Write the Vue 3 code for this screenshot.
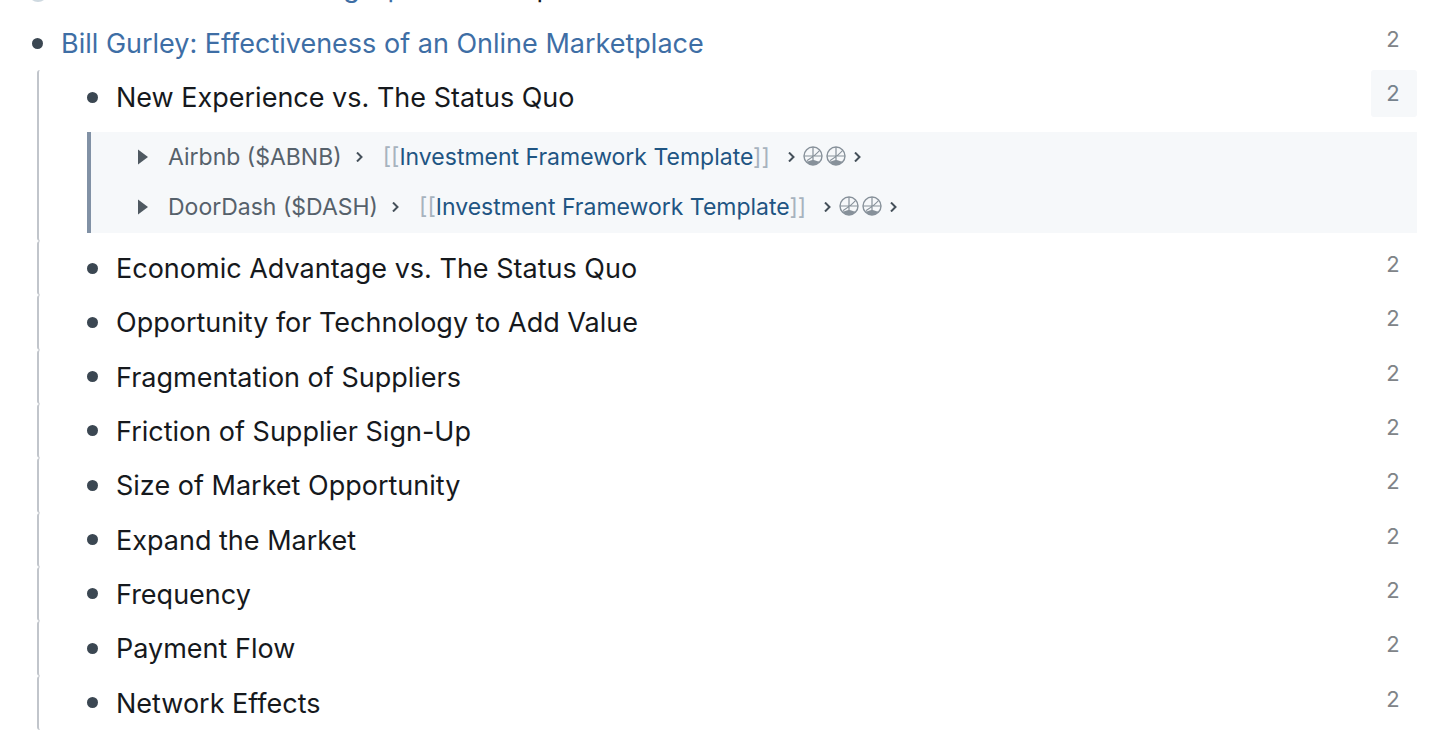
<script setup>
import { ref } from 'vue'

const mentions = [
  { name: 'Airbnb ($ABNB)', page: 'Investment Framework Template' },
  { name: 'DoorDash ($DASH)', page: 'Investment Framework Template' },
]

const open = ref('New Experience vs. The Status Quo')

const blocks = [
  'New Experience vs. The Status Quo',
  'Economic Advantage vs. The Status Quo',
  'Opportunity for Technology to Add Value',
  'Fragmentation of Suppliers',
  'Friction of Supplier Sign-Up',
  'Size of Market Opportunity',
  'Expand the Market',
  'Frequency',
  'Payment Flow',
  'Network Effects',
]

function toggle(title) {
  open.value = open.value === title ? '' : title
}
</script>

<template>
  <main class="outline">
    <div class="previous">
      <span class="bullet halo"></span>
      <p class="title"><a href="#">Investments: Marketing Updates</a> Template</p>
    </div>

    <div class="row">
      <span class="bullet"></span>
      <h1 class="title"><a href="#">Bill Gurley: Effectiveness of an Online Marketplace</a></h1>
      <button class="count" type="button" aria-label="2 references">2</button>
    </div>

    <ul class="children">
      <li v-for="block in blocks" :key="block" class="block" :class="{ expanded: open === block }">
        <div class="row">
          <span class="bullet"></span>
          <p class="title">{{ block }}</p>
          <button
            class="count"
            :class="{ active: open === block }"
            type="button"
            aria-label="2 references"
            :aria-expanded="open === block"
            @click="toggle(block)"
          >2</button>
        </div>

        <div v-if="open === block" class="mentions">
          <div v-for="m in mentions" :key="m.name" class="mention">
            <button class="caret" type="button" :aria-label="'Expand ' + m.name">
              <svg width="10" height="16" viewBox="0 0 10 16"><path d="M0 0.5 10 8 0 15.5z" fill="#4f5961" /></svg>
            </button>
            <span class="name">{{ m.name }}</span>
            <svg class="chevron" width="7" height="10" viewBox="0 0 7 10"><path d="M1 0.500l4.500 4.500L1 9.500" /></svg>
            <span class="page"><span class="bracket">[[</span><a href="#">{{ m.page }}</a><span class="bracket">]]</span></span>
            <svg class="chevron" width="7" height="10" viewBox="0 0 7 10"><path d="M1 0.500l4.500 4.500L1 9.500" /></svg>
            <span class="globes">
              <svg v-for="n in 2" :key="n" width="20" height="20" viewBox="0 0 20 20">
                <circle cx="10" cy="10" r="9" fill="none" stroke="#87919a" stroke-width="1.4" />
                <path d="M10 1v15M1 10h18M4 14.5C8 12 13 9 16.5 4.5" fill="none" stroke="#87919a" stroke-width="1.2" />
                <path d="M3.5 15.500c3-.3 4-1.500 6.500-1.500s3.500 1.200 6.500 1.500c-3.500 4.500-9.500 4.500-13 0z" fill="#87919a" />
              </svg>
            </span>
            <svg class="chevron" width="7" height="10" viewBox="0 0 7 10"><path d="M1 0.500l4.500 4.500L1 9.500" /></svg>
          </div>
        </div>
      </li>
    </ul>
  </main>
</template>

<style>
body {
  margin: 0;
  background: #fff;
}
</style>

<style scoped>
.outline {
  display: flex;
  flex-direction: column;
  box-sizing: border-box;
  min-height: 100vh;
  padding: 0 39px 8px 32px;
  overflow: hidden;
  font-family: Inter, "Liberation Sans", sans-serif;
  font-size: 27px;
  line-height: 32px;
  color: #16191d;
}

a {
  color: #3e6ea5;
  text-decoration: none;
}

button {
  padding: 0;
  border: 0;
  background: none;
  font: inherit;
  cursor: pointer;
}

.previous,
.row {
  display: flex;
  align-items: center;
}

.previous {
  margin-top: -28px;
  height: 44px;
  align-items: flex-start;
}

.row {
  min-height: 54px;
}

.bullet {
  flex: none;
  width: 11px;
  height: 11px;
  margin-right: 18px;
  border-radius: 50%;
  background: #3b4752;
}

.halo {
  width: 20px;
  height: 20px;
  margin: 10px 14px 0 -4px;
  background: #ced9e0;
}

.title {
  flex: 1;
  margin: 0;
  font-size: inherit;
  font-weight: 400;
}

.row .title {
  padding-top: 2px;
}

.count {
  flex: none;
  align-self: flex-start;
  width: 46px;
  height: 47px;
  padding-right: 2px;
  border-radius: 3px;
  font-size: 22px;
  line-height: 47px;
  color: #808488;
}

.count.active {
  background: #f6f8fa;
  color: #77838d;
}

.children {
  display: flex;
  flex: 1;
  flex-direction: column;
  margin: 0;
  padding: 0 0 0 5px;
  list-style: none;
}

.block {
  display: flex;
  flex: 1 0 auto;
  flex-direction: column;
  padding-left: 48px;
  border-left: 2px solid #c1c5cb;
  border-radius: 3px;
}

.block.expanded {
  flex: none;
}

.mentions {
  margin: 8px 0;
  padding: 0 0 1px 47px;
  border-left: 4px solid #8191a5;
  background: #f6f8fa;
  font-size: 23px;
  color: #56616b;
}

.mention {
  display: flex;
  align-items: center;
  min-height: 50px;
}

.caret {
  display: flex;
  margin-right: 20px;
}

.name {
  margin-right: 14px;
}

.chevron {
  fill: none;
  stroke: #45505a;
  stroke-width: 2;
}

.page {
  margin: 0 18px 0 20px;
}

.page a {
  color: #1f5583;
}

.bracket {
  color: #a7b3be;
}

.globes {
  display: flex;
  gap: 3px;
  margin: 0 8px;
  padding-bottom: 2px;
}
</style>
